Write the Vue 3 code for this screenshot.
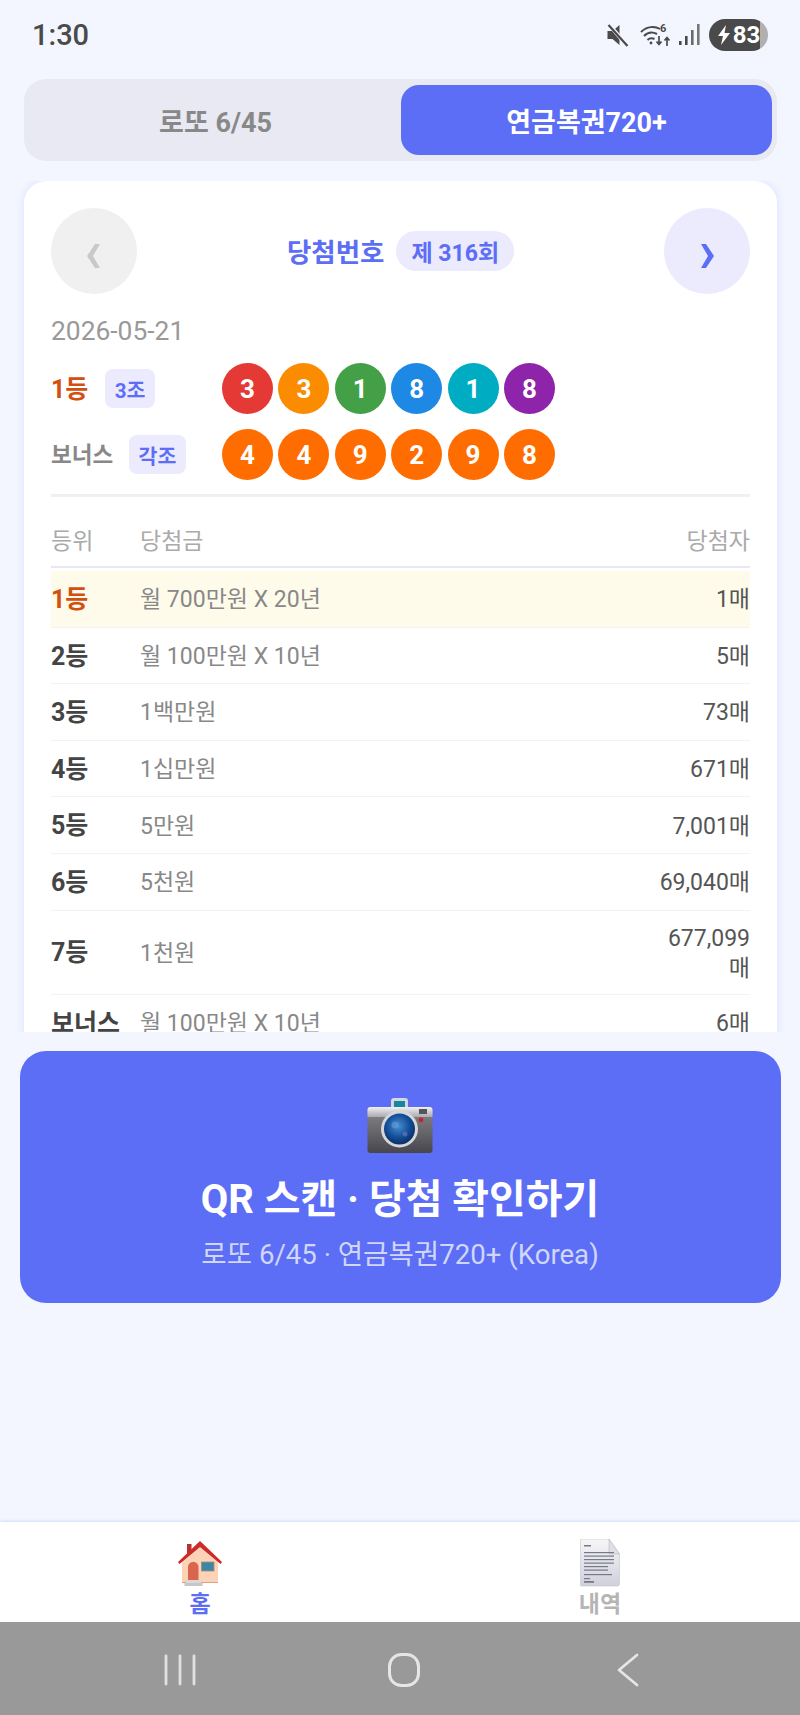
<template>
  <div class="app">
    <div class="status-bar">
      <span class="clock">1:30</span>
      <div class="status-icons">
        <svg class="ic-mute" width="25" height="24" viewBox="0 0 24 24">
          <path d="M2 8h5l7-6v20l-7-6H2z" fill="#4a4a4a" />
          <path d="M3 1l19 22" stroke="#f3f6ff" stroke-width="4" />
          <path d="M3 2l19 21" stroke="#4a4a4a" stroke-width="2.2" />
        </svg>
        <svg class="ic-wifi" width="32" height="24" viewBox="0 0 32 24" fill="none" stroke="#4a4a4a">
          <path d="M1 9c6-6 14-6 19-3" stroke-width="2" />
          <path d="M4 13c4-4 9-4 13-2" stroke-width="2" />
          <path d="M7.500 17c2-2 5-2 7-1" stroke-width="2" />
          <circle cx="11" cy="20" r="1.400" fill="#4a4a4a" stroke="none" />
          <text x="20" y="9" class="wifi-num">6</text>
          <path d="M19 13v8m-2.500-2.500l2.500 3 2.500-3M27 23v-8m-2.500 2.500l2.500-3 2.500 3" stroke-width="1.700" />
        </svg>
        <svg class="ic-signal" width="21" height="24" viewBox="0 0 21 24" fill="#4a4a4a">
          <rect x="0" y="18" width="2.600" height="4" />
          <rect x="6" y="13" width="2.600" height="9" />
          <rect x="12" y="7" width="2.600" height="15" fill="#6a6a6a" />
          <rect x="18" y="1" width="2.600" height="21" fill="#777" />
        </svg>
        <div class="battery">
          <svg width="14" height="20" viewBox="0 0 14 20"><path d="M9 0L1 11h5l-2 9 9-12H7.500z" fill="#fff" /></svg>
          <span>83</span>
        </div>
      </div>
    </div>

    <div class="tabs">
      <button class="tab">로또 6/45</button>
      <button class="tab active">연금복권720+</button>
    </div>

    <div class="scroll">
      <div class="card">
        <div class="card-head">
          <button class="nav-btn prev">
            <svg width="14" height="24" viewBox="0 0 14 24"><path d="M8 0L0 12l8 12h5L6 12l7-12z" fill="#c9c9c9" /></svg>
          </button>
          <div class="head-title">
            <span class="title">당첨번호</span>
            <span class="round">제 316회</span>
          </div>
          <button class="nav-btn next">
            <svg width="14" height="24" viewBox="0 0 14 24"><path d="M6 0l8 12-8 12H1l7-12L1 0z" fill="#5b6ef5" /></svg>
          </button>
        </div>
        <div class="date">2026-05-21</div>

        <div v-for="row in drawRows" :key="row.label" class="draw-row">
          <div class="draw-label">
            <span class="draw-name" :class="{ first: row.first }">{{ row.label }}</span>
            <span class="draw-tag">{{ row.tag }}</span>
          </div>
          <div class="balls">
            <span
              v-for="(ball, i) in row.balls"
              :key="i"
              class="ball"
              :style="{ background: ball.color }"
            >{{ ball.n }}</span>
          </div>
        </div>

        <div class="divider"></div>

        <div class="prize-head">
          <span>등위</span>
          <span>당첨금</span>
          <span class="right">당첨자</span>
        </div>
        <div
          v-for="(p, i) in prizes"
          :key="p.rank"
          class="prize-row"
          :class="{ top: i === 0 }"
        >
          <span class="rank">{{ p.rank }}</span>
          <span class="amount">{{ p.amount }}</span>
          <span class="winners">{{ p.winners }}</span>
        </div>
      </div>
    </div>

    <button class="scan-btn">
      <svg class="camera" width="66" height="55" viewBox="0 0 66 55">
        <defs>
          <linearGradient id="camBody" x1="0" y1="0" x2="0" y2="1">
            <stop offset="0" stop-color="#8a8a8e" />
            <stop offset="1" stop-color="#46464c" />
          </linearGradient>
          <linearGradient id="camTop" x1="0" y1="0" x2="0" y2="1">
            <stop offset="0" stop-color="#f2f2f4" />
            <stop offset="1" stop-color="#a9a9ae" />
          </linearGradient>
          <radialGradient id="camLens" cx="0.450" cy="0.400" r="0.600">
            <stop offset="0" stop-color="#4a8fd0" />
            <stop offset="0.600" stop-color="#14509a" />
            <stop offset="1" stop-color="#0c2f66" />
          </radialGradient>
        </defs>
        <rect x="24" y="0" width="17" height="11" rx="3" fill="#d5d7dc" />
        <rect x="27" y="3" width="11" height="7" fill="#1587a5" />
        <rect x="0.500" y="9" width="65" height="46" rx="3" fill="url(#camBody)" />
        <path d="M.500 19v-7a3 3 0 0 1 3-3h59a3 3 0 0 1 3 3v7z" fill="url(#camTop)" />
        <rect x="52" y="11" width="8" height="5" fill="#55555a" />
        <circle cx="54" cy="22" r="2.400" fill="#c4262c" />
        <circle cx="32.500" cy="31" r="18.500" fill="#d6d7dc" />
        <circle cx="32.500" cy="31" r="15.500" fill="url(#camLens)" />
        <circle cx="28" cy="27" r="3.500" fill="#6fa4dc" opacity="0.500" />
        <circle cx="38" cy="36" r="2.500" fill="#7f7fd0" opacity="0.500" />
      </svg>
      <span class="scan-title">QR 스캔 · 당첨 확인하기</span>
      <span class="scan-sub">로또 6/45 · 연금복권720+ (Korea)</span>
    </button>

    <div class="bottom-nav">
      <div class="bottom-item on">
        <svg width="45" height="48" viewBox="0 -1 45 48">
          <rect x="9" y="4" width="4.500" height="13" fill="#b8312f" />
          <path d="M4 21L22 3l18 18v22H4z" fill="#fcd3b6" />
          <path d="M0 22L22 1l22 21-1.500 2L22 7 1.500 24z" fill="#cf2a2a" />
          <path d="M4 43h36v-1H4z" fill="#d8a38a" />
          <path d="M10 40V27a5.250 5.250 0 0 1 10.500 0v13z" fill="#d9654e" />
          <rect x="23.500" y="22" width="12.500" height="9" fill="#3d86a6" stroke="#b08a78" stroke-width="0.800" />
          <rect x="8" y="40" width="15" height="3" fill="#ddd8d8" />
          <rect x="6.500" y="43" width="18" height="3" fill="#c9c6c6" />
        </svg>
        <span>홈</span>
      </div>
      <div class="bottom-item">
        <svg width="40" height="48" viewBox="0 0 40 48">
          <defs>
            <linearGradient id="docBg" x1="0" y1="0" x2="0" y2="1">
              <stop offset="0" stop-color="#f6f6f8" />
              <stop offset="1" stop-color="#cfd0dc" />
            </linearGradient>
          </defs>
          <path d="M1.500 0H29l10.500 15v30a2 2 0 0 1-2 2h-36a1 1 0 0 1-1-1V1a1 1 0 0 1 1-1z" fill="url(#docBg)" stroke="#c4c5cc" stroke-width="0.600" />
          <path d="M29 0v15h10.500z" fill="#dfe0e6" stroke="#b9bac2" stroke-width="0.600" />
          <g fill="#777a86">
            <rect x="4" y="6" width="7" height="1.500" />
            <rect x="4" y="13" width="30" height="1.200" />
            <rect x="4" y="16.500" width="30" height="1.200" />
            <rect x="4" y="20" width="30" height="1.200" />
            <rect x="4" y="23.500" width="30" height="1.200" />
            <rect x="4" y="27" width="24" height="1.200" />
            <rect x="4" y="30.500" width="24" height="1.200" />
            <rect x="4" y="35" width="28" height="1.200" />
            <rect x="4" y="39" width="6" height="1.200" />
            <rect x="4" y="42" width="10" height="1.800" />
          </g>
        </svg>
        <span>내역</span>
      </div>
    </div>

    <div class="system-nav">
      <svg width="32" height="32" viewBox="0 0 32 32" fill="none" stroke="#e0e0e0" stroke-width="2.800" stroke-linecap="round">
        <path d="M2 2v28M16 2v28M30 2v28" />
      </svg>
      <svg width="34" height="36" viewBox="0 0 34 36" fill="none" stroke="#e6e6e6" stroke-width="3">
        <rect x="2.500" y="2.500" width="29" height="31" rx="12" />
      </svg>
      <svg width="24" height="34" viewBox="0 0 24 34" fill="none" stroke="#e6e6e6" stroke-width="2.800" stroke-linecap="round" stroke-linejoin="round">
        <path d="M21 2L3 17l18 15" />
      </svg>
    </div>
  </div>
</template>

<script setup>
const orange = "#ff6d00";

const drawRows = [
  {
    label: "1등",
    tag: "3조",
    first: true,
    balls: [
      { n: 3, color: "#e53935" },
      { n: 3, color: "#fb8c00" },
      { n: 1, color: "#43a047" },
      { n: 8, color: "#1e88e5" },
      { n: 1, color: "#00acc1" },
      { n: 8, color: "#8e24aa" },
    ],
  },
  {
    label: "보너스",
    tag: "각조",
    first: false,
    balls: [4, 4, 9, 2, 9, 8].map((n) => ({ n, color: orange })),
  },
];

const prizes = [
  { rank: "1등", amount: "월 700만원 X 20년", winners: "1매" },
  { rank: "2등", amount: "월 100만원 X 10년", winners: "5매" },
  { rank: "3등", amount: "1백만원", winners: "73매" },
  { rank: "4등", amount: "1십만원", winners: "671매" },
  { rank: "5등", amount: "5만원", winners: "7,001매" },
  { rank: "6등", amount: "5천원", winners: "69,040매" },
  { rank: "7등", amount: "1천원", winners: "677,099매" },
  { rank: "보너스", amount: "월 100만원 X 10년", winners: "6매" },
];
</script>

<style>
body {
  background: #f3f6ff;
}
</style>

<style scoped>
.app {
  width: 800px;
  height: 1715px;
  display: flex;
  flex-direction: column;
  overflow: hidden;
  background: #f3f6ff;
  font-family: Roboto, "Noto Sans CJK KR", sans-serif;
}

button {
  border: none;
  font-family: inherit;
  padding: 0;
}

.status-bar {
  height: 70px;
  flex: none;
  display: flex;
  justify-content: space-between;
  align-items: center;
  padding: 0 32px;
}

.clock {
  font-size: 29px;
  font-weight: 500;
  color: #4a4a4a;
}

.status-icons {
  display: flex;
  align-items: center;
  gap: 7px;
}

.ic-wifi {
  margin-left: 3px;
}

.wifi-num {
  font-size: 11px;
  font-weight: 700;
  fill: #4a4a4a;
  stroke: none;
}

.battery {
  width: 59px;
  height: 32px;
  border-radius: 16px;
  background: linear-gradient(to right, #4a4a4a 87%, #b0b0b0 87%);
  display: flex;
  align-items: center;
  justify-content: center;
  gap: 2px;
  font-size: 24px;
  font-weight: 700;
  color: #fff;
  margin-left: 2px;
}

.tabs {
  flex: none;
  height: 82px;
  margin: 9px 23px 0 24px;
  padding: 6px 5px 6px 6px;
  box-sizing: border-box;
  border-radius: 22px;
  background: #e8e9f3;
  display: grid;
  grid-template-columns: 1fr 1fr;
}

.tab {
  border-radius: 18px;
  background: transparent;
  font-size: 27px;
  font-weight: 700;
  color: #888;
}

.tab.active {
  background: #5b6ef5;
  color: #fff;
}

.scroll {
  flex: none;
  height: 851px;
  margin-top: 20px;
  padding: 0 23px 0 24px;
  overflow: hidden;
}

.card {
  background: #fff;
  border-radius: 22px 22px 0 0;
  padding: 27px 27px 0;
  box-shadow: 0 0 8px rgba(91, 110, 245, 0.16);
}

.card-head {
  display: flex;
  align-items: center;
  justify-content: space-between;
}

.nav-btn {
  width: 86px;
  height: 86px;
  border-radius: 50%;
  display: flex;
  align-items: center;
  justify-content: center;
}

.nav-btn svg {
  margin-top: 10px;
}

.prev {
  background: #f0f0f0;
}

.next {
  background: #eceafd;
}

.head-title {
  display: flex;
  align-items: center;
  gap: 12px;
}

.title {
  font-size: 26.5px;
  font-weight: 700;
  color: #5b6ef5;
  margin-top: -2px;
}

.round {
  height: 40px;
  padding: 0 15px;
  border-radius: 20px;
  background: #eceafd;
  display: flex;
  align-items: center;
  font-size: 23px;
  font-weight: 700;
  color: #5b6ef5;
}

.date {
  margin-top: 23px;
  font-size: 26.4px;
  line-height: 28px;
  color: #999;
}

.draw-row {
  display: flex;
  align-items: center;
  margin-top: 15px;
}

.date + .draw-row {
  margin-top: 18px;
}

.draw-label {
  width: 171px;
  display: flex;
  align-items: center;
  gap: 16px;
}

.draw-name {
  font-size: 22.5px;
  font-weight: 700;
  color: #888;
  margin-top: -4px;
}

.draw-name.first {
  font-size: 25px;
  color: #d2500f;
  margin-right: 1px;
}

.draw-tag {
  height: 39px;
  padding: 0 9.5px;
  border-radius: 8px;
  background: #eceafd;
  display: flex;
  align-items: center;
  font-size: 20.500px;
  font-weight: 700;
  color: #5b6ef5;
}

.balls {
  display: flex;
  gap: 5.4px;
}

.ball {
  width: 51px;
  height: 51px;
  border-radius: 50%;
  display: flex;
  align-items: center;
  justify-content: center;
  font-size: 26px;
  font-weight: 700;
  color: #fff;
}

.divider {
  height: 2.5px;
  margin-top: 14px;
  background: #f0f0f0;
}

.prize-head {
  height: 71.500px;
  padding-top: 16px;
  box-sizing: border-box;
  display: grid;
  grid-template-columns: 89px 1fr 96px;
  align-items: center;
  border-bottom: 2.5px solid #e8e8f2;
  margin-bottom: 3px;
  font-size: 23px;
  color: #aaa;
}

.right {
  text-align: right;
}

.prize-row {
  display: grid;
  grid-template-columns: 89px 1fr 96px;
  align-items: center;
  padding: 13px 0 10px;
  border-bottom: 1px solid #f3f3f3;
  line-height: 30px;
}

.prize-row.top {
  background: #fffbeb;
}

.rank {
  font-size: 25px;
  line-height: 32.600px;
  font-weight: 700;
  color: #444;
  white-space: nowrap;
}

.top .rank {
  color: #d2500f;
}

.amount {
  font-size: 23px;
  color: #888;
}

.winners {
  font-size: 23px;
  color: #555;
  text-align: right;
}

.scan-btn {
  flex: none;
  height: 252px;
  margin: 19px 19.5px 0;
  padding-top: 47px;
  box-sizing: border-box;
  border-radius: 26px;
  background: #5b6ef5;
  display: flex;
  flex-direction: column;
  align-items: center;
}

.camera {
  flex: none;
}

.scan-title {
  margin-top: 23px;
  font-size: 39.900px;
  line-height: 48px;
  font-weight: 700;
  color: #fff;
}

.scan-sub {
  margin-top: 15px;
  font-size: 27.600px;
  line-height: 32px;
  color: rgba(255, 255, 255, 0.72);
}

.bottom-nav {
  flex: none;
  height: 100px;
  margin-top: auto;
  background: #fff;
  box-shadow: 0 -1px 3px rgba(91, 110, 245, 0.2);
  display: grid;
  grid-template-columns: 1fr 1fr;
}

.bottom-item {
  display: flex;
  flex-direction: column;
  align-items: center;
  padding-top: 17px;
  gap: 3px;
  font-size: 23px;
  line-height: 30px;
  font-weight: 700;
  color: #b5b5b5;
}

.bottom-item.on {
  color: #5b6ef5;
}

.system-nav {
  flex: none;
  height: 93px;
  box-sizing: border-box;
  background: #999;
  display: grid;
  grid-template-columns: 224px 224px 224px;
  justify-items: center;
  align-items: center;
  padding: 3px 0 0 68px;
}
</style>
